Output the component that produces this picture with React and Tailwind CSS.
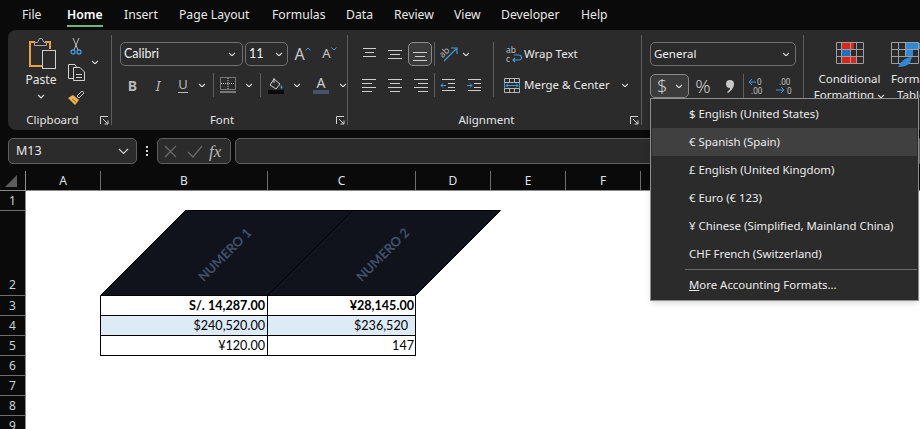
const ui = { fontFamily: '"Noto Sans", "Open Sans", sans-serif' };

const tabs = [
  ["File", 45],
  ["Home", 57],
  ["Insert", 55],
  ["Page Layout", 93],
  ["Formulas", 74],
  ["Data", 48],
  ["Review", 60],
  ["View", 47],
  ["Developer", 80],
  ["Help", 40],
];

function Chev({ size = 8, color = "#d6d6d6" }) {
  return (
    <svg width={size} height={size * 0.6} viewBox="0 0 8 5" fill="none" stroke={color} strokeWidth="1.3">
      <path d="M1 1l3 3 3-3" />
    </svg>
  );
}

function Slot({ w, className = "", children }) {
  return (
    <div className={`flex h-full shrink-0 items-center justify-center ${w} ${className}`}>{children}</div>
  );
}

function VLine({ tall }) {
  return <div className={`w-px shrink-0 self-start bg-[#5e5e5e] ${tall ? "h-[31px]" : "h-[24px]"}`}></div>;
}

function Launcher() {
  return (
    <div className="flex w-[14px] shrink-0 justify-center">
      <svg width="9" height="9" viewBox="0 0 9 9" fill="none" stroke="#cfcfcf" strokeWidth="1">
        <path d="M.5 8V.5H8M3 3l5 5M8 4.5V8H4.5" />
      </svg>
    </div>
  );
}

function GroupLabel({ w, mt = "mt-[14px]", children }) {
  return (
    <div className={`flex h-[18px] shrink-0 items-center ${mt}`}>
      <div className={`text-center text-[11.5px] text-[#e4e4e4] ${w}`}>{children}</div>
      <div className="ml-auto">
        <Launcher />
      </div>
    </div>
  );
}

function GroupSep() {
  return <div className="my-[5px] w-px shrink-0 bg-[#5e5e5e]"></div>;
}

function Lines({ rows, w = 15, h = 14 }) {
  // rows: [y, x1, x2]
  return (
    <svg width={w} height={h} viewBox={`0 0 ${w} ${h}`} fill="none" stroke="#cdcdcd" strokeWidth="1">
      {rows.map((r, i) => (
        <path key={i} d={`M${r[1]} ${r[0] + 0.5}H${r[2]}`} />
      ))}
    </svg>
  );
}

function PasteIcon() {
  return (
    <svg width="30" height="34" viewBox="0 0 30 34" fill="none">
      <path d="M7 6H2v24h13" stroke="#e9a23b" strokeWidth="2" />
      <path d="M17 6h5v7" stroke="#e9a23b" strokeWidth="2" />
      <path d="M6.500 9.500V6.500H9.500L11.500 2.500H14L16 6.500H18.500V9.500Z" stroke="#a8a8a8" fill="#2b2b2b" />
      <rect x="14.500" y="14.500" width="13" height="18" stroke="#cfcfcf" fill="#2b2b2b" />
    </svg>
  );
}

function ScissorsIcon() {
  return (
    <svg width="12" height="17" viewBox="0 0 12 17" fill="none">
      <path d="M3 0l5 12M9 0L4 12" stroke="#bdbdbd" strokeWidth="1" />
      <circle cx="3" cy="14" r="2" stroke="#3d9be0" strokeWidth="1.300" />
      <circle cx="9" cy="14" r="2" stroke="#3d9be0" strokeWidth="1.300" />
    </svg>
  );
}

function CopyIcon() {
  return (
    <svg width="17" height="17" viewBox="0 0 17 17" fill="none" stroke="#d0d0d0" strokeWidth="1">
      <path d="M5.500 14.500H.5V.5H7L8.500 3" />
      <path d="M5.500 3.500H12L16.500 8V16.500H5.500Z" fill="#2b2b2b" />
      <path d="M8 10.500H14M8 13.500H14" />
    </svg>
  );
}

function BrushIcon() {
  return (
    <svg width="18" height="16" viewBox="0 0 18 16">
      <path d="M10 6l5-5 2 2-5 5z" fill="none" stroke="#c4c4c4" strokeWidth="1" />
      <path d="M1 8l5-3 6 5-4 5z" fill="#eeb04a" />
      <path d="M5 9l4 3" stroke="#8a6a2e" strokeWidth="1" />
    </svg>
  );
}

function BordersIcon() {
  return (
    <svg width="16" height="16" viewBox="0 0 16 16" fill="none" stroke="#c4c4c4" strokeWidth="1">
      <path d="M.5.5h15v12H.5z" strokeDasharray="1 1" />
      <path d="M8 1v11M1 6.500h14" strokeDasharray="1 1" />
      <path d="M0 15h16" />
    </svg>
  );
}

function FillIcon() {
  return (
    <svg width="16" height="17" viewBox="0 0 16 17" fill="none">
      <path d="M6 2l6 5-4 5-6-4z" stroke="#d0d0d0" strokeWidth="1" fill="#2b2b2b" />
      <path d="M6 1v5" stroke="#d0d0d0" strokeWidth="1" />
      <path d="M13 8c1.500 1.500 2 3 1 3.500s-2-.5-1-3.500z" fill="#3d9be0" />
      <path d="M0 15h16" stroke="#0b0b0e" strokeWidth="4" />
    </svg>
  );
}

function ZCFIcon() {
  return (
    <svg width="28" height="23" viewBox="0 0 28 23">
      <rect x="5" y="0" width="13" height="7" fill="#dc2419" />
      <rect x="5" y="8" width="9" height="7" fill="#1e70c1" />
      <rect x="5" y="15" width="15" height="7" fill="#dc2419" />
      <path d="M.5.5h27v21H.5zM5.500 0v22M14.500 0v22M20.500 0v22M0 7.500h28M0 14.500h28" fill="none" stroke="#9e9e9e" strokeWidth="1" />
    </svg>
  );
}

function TableIcon() {
  return (
    <svg width="29" height="26" viewBox="0 0 29 26">
      <rect x="14" y="8" width="8" height="7" fill="#2f87d6" />
      <rect x="14" y="1" width="15" height="6" fill="#2f87d6" />
      <path d="M.5.5h27v21H.5zM7.500 0v22M14.500 0v15M0 7.500h28M0 14.500h28" fill="none" stroke="#9e9e9e" strokeWidth="1" />
      <path d="M7 25c3-6 8-10 14-10l-2 6c-3 3-8 4-12 4z" fill="#2f87d6" />
    </svg>
  );
}

function Ribbon() {
  return (
    <div className="ml-[8px] flex h-[100px] shrink-0 overflow-hidden rounded-l-[8px] bg-[#2b2b2b]">
      {/* Clipboard */}
      <div className="flex w-[103px] shrink-0 flex-col">
        <div className="flex h-[81px] shrink-0">
          <div className="flex w-[56px] flex-col items-center pl-[10px] pt-[6px]">
            <div className="ml-[4px]"><PasteIcon /></div>
            <div className="mt-[1px] text-[12px] leading-[18px] text-[#e8e8e8]">Paste</div>
            <div className="mt-[5px]"><Chev /></div>
          </div>
          <div className="flex w-[24px] flex-col items-center pt-[8px]">
            <ScissorsIcon />
            <div className="mt-[9px]"><CopyIcon /></div>
            <div className="mt-[9px]"><BrushIcon /></div>
          </div>
          <div className="flex w-[14px] items-center pb-[17px] pl-[3px]"><Chev /></div>
        </div>
        <GroupLabel w="w-[91px]" mt="mt-0">Clipboard</GroupLabel>
      </div>
      <GroupSep />

      {/* Font */}
      <div className="flex w-[235px] shrink-0 flex-col pt-[12px]">
        <div className="flex h-[24px] shrink-0 items-center pl-[8px]">
          <div className="flex h-[24px] w-[123px] items-center justify-between rounded-[5px] border border-[#707070] pl-[3px] pr-[6px] text-[12.5px] text-[#f0f0f0]" style={{ fontFamily: "Lato, sans-serif" }}>
            Calibri <Chev />
          </div>
          <div className="ml-[2px] flex h-[24px] w-[43px] items-center justify-between rounded-[5px] border border-[#707070] pl-[3px] pr-[4px] text-[12.5px] text-[#f0f0f0]" style={{ fontFamily: "Lato, sans-serif" }}>
            11 <Chev />
          </div>
          <Slot w="w-[27px]" className="ml-[1px]">
            <span className="text-[16px] text-[#c8c8c8]">A</span>
            <svg width="6" height="4" viewBox="0 0 6 4" fill="none" stroke="#3d9be0" className="mb-[10px]"><path d="M.5 3.500L3 1l2.500 2.500" /></svg>
          </Slot>
          <Slot w="w-[27px]">
            <span className="text-[13px] text-[#c8c8c8]">A</span>
            <svg width="6" height="4" viewBox="0 0 6 4" fill="none" stroke="#3d9be0" className="mb-[10px]"><path d="M.5.5L3 3l2.500-2.500" /></svg>
          </Slot>
        </div>
        <div className="mt-[7px] flex h-[24px] shrink-0 items-center pl-[8px]">
          <Slot w="w-[25px]"><span className="text-[14px] font-bold text-[#b8b8b8]">B</span></Slot>
          <Slot w="w-[26px]"><span className="text-[14px] italic text-[#b8b8b8]">I</span></Slot>
          <Slot w="w-[24px]"><span className="border-b border-[#b8b8b8] text-[13px] leading-[15px] text-[#b8b8b8]">U</span></Slot>
          <Slot w="w-[14px]"><Chev /></Slot>
          <Slot w="w-[4px]"></Slot>
          <VLine />
          <Slot w="w-[5px]"></Slot>
          <Slot w="w-[17px]"><BordersIcon /></Slot>
          <Slot w="w-[6px]"></Slot>
          <Slot w="w-[14px]"><Chev /></Slot>
          <Slot w="w-[4px]"></Slot>
          <VLine />
          <Slot w="w-[6px]"></Slot>
          <Slot w="w-[17px]"><FillIcon /></Slot>
          <Slot w="w-[6px]"></Slot>
          <Slot w="w-[14px]"><Chev /></Slot>
          <Slot w="w-[8px]"></Slot>
          <Slot w="w-[18px]">
            <div className="flex flex-col items-center">
              <span className="text-[14px] leading-[14px] text-[#cfcfcf]">A</span>
              <div className="h-[4px] w-[16px] bg-[#44546a]"></div>
            </div>
          </Slot>
          <Slot w="w-[6px]"></Slot>
          <Slot w="w-[14px]"><Chev /></Slot>
        </div>
        <GroupLabel w="w-[220px]">Font</GroupLabel>
      </div>
      <GroupSep />

      {/* Alignment */}
      <div className="flex w-[293px] shrink-0 flex-col pt-[12px]">
        <div className="flex h-[24px] shrink-0 items-center pl-[9px]">
          <Slot w="w-[24px]"><Lines rows={[[1, 1, 14], [5, 3, 12], [9, 1, 14]]} /></Slot>
          <Slot w="w-[27px]"><Lines rows={[[3, 1, 15], [7, 3, 13], [11, 1, 15]]} w={16} /></Slot>
          <div className="flex h-[24px] w-[24px] shrink-0 items-center justify-center rounded-[5px] border border-[#8a8a8a] bg-[#3b3b3b]">
            <Lines rows={[[5, 1, 15], [9, 3, 13], [13, 1, 15]]} w={16} />
          </div>
          <Slot w="w-[2px]"></Slot>
          <VLine />
          <Slot w="w-[24px]" className="ml-[2px]">
            <svg width="20" height="18" viewBox="0 0 20 18" fill="none">
              <text x="1" y="11" fontSize="9" fill="#b8b8b8" transform="rotate(-45 5 9)" style={ui}>ab</text>
              <path d="M5 16L17 4M12 3h6v6" stroke="#3d9be0" strokeWidth="1.200" />
            </svg>
          </Slot>
          <Slot w="w-[10px]"><Chev /></Slot>
          <Slot w="w-[22px]"></Slot>
          <VLine tall />
          <Slot w="w-[12px]"></Slot>
          <Slot w="w-[17px]">
            <svg width="17" height="18" viewBox="0 0 17 18" fill="none">
              <text x="0" y="8" fontSize="8.500" fill="#bdbdbd" style={ui}>ab</text>
              <text x="0" y="17" fontSize="8.500" fill="#bdbdbd" style={ui}>c</text>
              <path d="M7 15h6a2.500 2.500 0 000-5H8M9 13l-2 2 2 2" stroke="#3d9be0" strokeWidth="1.100" />
            </svg>
          </Slot>
          <span className="ml-px whitespace-nowrap text-[11.5px] text-[#e8e8e8]">Wrap Text</span>
        </div>
        <div className="mt-[7px] flex h-[24px] shrink-0 items-center pl-[9px]">
          <Slot w="w-[24px]"><Lines rows={[[1, 1, 15], [5, 1, 11], [9, 1, 15], [13, 1, 11]]} w={16} /></Slot>
          <Slot w="w-[27px]"><Lines rows={[[1, 1, 15], [5, 3, 13], [9, 1, 15], [13, 3, 13]]} w={16} /></Slot>
          <Slot w="w-[26px]"><Lines rows={[[1, 1, 15], [5, 5, 15], [9, 1, 15], [13, 5, 15]]} w={16} /></Slot>
          <VLine />
          <Slot w="w-[26px]">
            <svg width="16" height="14" viewBox="0 0 16 14" fill="none" stroke="#cdcdcd"><path d="M2 1.500h13M8 5.500h7M8 9.500h7M2 12.500h13" /><path d="M6 7.500H1M3 5.500l-2 2 2 2" stroke="#3d9be0" /></svg>
          </Slot>
          <Slot w="w-[26px]">
            <svg width="16" height="14" viewBox="0 0 16 14" fill="none" stroke="#cdcdcd"><path d="M2 1.500h13M8 5.500h7M8 9.500h7M2 12.500h13" /><path d="M1 7.500h5M4 5.500l2 2-2 2" stroke="#3d9be0" /></svg>
          </Slot>
          <Slot w="w-[6px]"></Slot>
          <VLine />
          <Slot w="w-[10px]"></Slot>
          <Slot w="w-[16px]">
            <svg width="16" height="15" viewBox="0 0 16 15" fill="none">
              <path d="M.5.5h15v14H.5zM5.500 0v4M10.500 0v4M5.500 11v4M10.500 11v4M0 4.500h16M0 10.500h16" stroke="#b4b4b4" />
              <path d="M.5 4.500v6M15.500 4.500v6M2 7.500h12M4 5.500l-2 2 2 2M12 5.500l2 2-2 2" stroke="#3d9be0" />
            </svg>
          </Slot>
          <span className="ml-[4px] whitespace-nowrap text-[11.5px] text-[#e8e8e8]">Merge &amp; Center</span>
          <Slot w="w-[14px]" className="ml-[8px]"><Chev /></Slot>
        </div>
        <GroupLabel w="w-[277px]">Alignment</GroupLabel>
      </div>
      <GroupSep />

      {/* Number, its label is behind the open menu */}
      <div className="flex w-[161px] shrink-0 flex-col pl-[8px] pt-[12px]">
        <div className="flex h-[24px] w-[146px] shrink-0 items-center justify-between rounded-[5px] border border-[#707070] pl-[3px] pr-[5px] text-[11.5px] text-[#f0f0f0]">
          General <Chev />
        </div>
        <div className="mt-[8px] flex h-[24px] shrink-0 items-center">
          <div className="flex h-[24px] w-[39px] shrink-0 items-center justify-between rounded-[5px] border border-[#8a8a8a] bg-[#3b3b3b] pl-[6px] pr-[5px]">
            <span className="text-[18px] font-light text-[#cfcfcf]">$</span><Chev />
          </div>
          <Slot w="w-[28px]"><span className="text-[19px] font-light leading-none text-[#c8c8c8]">%</span></Slot>
          <Slot w="w-[26px]">
            <svg width="8" height="13" viewBox="0 0 8 13"><path d="M4 0a4 4 0 014 4c0 4-3 7-6 9l-1-1c2-1 3-3 3-4a4 4 0 010-8z" fill="#c8c8c8" /></svg>
          </Slot>
          <VLine />
          <Slot w="w-[26px]">
            <svg width="18" height="18" viewBox="0 0 18 18" fill="none">
              <text x="9" y="8" fontSize="8" fill="#c4c4c4" style={ui}>0</text>
              <text x="3" y="17" fontSize="8" fill="#c4c4c4" style={ui}>.00</text>
              <path d="M8 5H1M4 2L1 5l3 3" stroke="#3d9be0" />
            </svg>
          </Slot>
          <Slot w="w-[28px]">
            <svg width="18" height="18" viewBox="0 0 18 18" fill="none">
              <text x="4" y="8" fontSize="8" fill="#c4c4c4" style={ui}>.00</text>
              <text x="12" y="17" fontSize="8" fill="#c4c4c4" style={ui}>0</text>
              <path d="M1 13h8M6 10l3 3-3 3" stroke="#3d9be0" />
            </svg>
          </Slot>
        </div>
      </div>
      <GroupSep />

      {/* Styles */}
      <div className="flex pt-[12px]">
        <div className="flex w-[87px] shrink-0 flex-col items-center pl-[4px]">
          <ZCFIcon />
          <div className="mt-[6px] text-center text-[11.5px] leading-[16px] text-[#e8e8e8]">Conditional<br />Formatting <span className="inline-block align-middle"><Chev /></span></div>
        </div>
        <div className="flex w-[60px] shrink-0 flex-col">
          <TableIcon />
          <div className="mt-[3px] whitespace-nowrap text-[11.5px] leading-[16px] text-[#e8e8e8]">Format as<br /><span className="pl-[6px]">Table</span></div>
        </div>
      </div>
    </div>
  );
}

function FormulaBar() {
  return (
    <div className="mt-[8px] flex h-[26px] shrink-0 items-center pl-[8px]">
      <div className="flex h-[26px] w-[129px] shrink-0 items-center justify-between rounded-[5px] border border-[#5f5f5f] bg-[#2b2b2b] px-[7px] text-[12.5px] text-[#e8e8e8]">
        M13
        <svg width="11" height="7" viewBox="0 0 11 7" fill="none" stroke="#d0d0d0" strokeWidth="1.200"><path d="M1 1l4.500 4.500L10 1" /></svg>
      </div>
      <div className="flex w-[20px] shrink-0 flex-col items-center gap-[2px]">
        <div className="h-[2px] w-[2px] bg-[#d8d8d8]"></div>
        <div className="h-[2px] w-[2px] bg-[#d8d8d8]"></div>
        <div className="h-[2px] w-[2px] bg-[#d8d8d8]"></div>
      </div>
      <div className="flex h-[26px] w-[74px] shrink-0 items-center rounded-[5px] border border-[#5f5f5f] bg-[#2b2b2b] pl-[6px]">
        <svg width="13" height="13" viewBox="0 0 13 13" fill="none" stroke="#6a6a6a" strokeWidth="1.200"><path d="M1 1l11 11M12 1L1 12" /></svg>
        <svg width="16" height="13" viewBox="0 0 16 13" fill="none" stroke="#6a6a6a" strokeWidth="1.200" className="ml-[10px]"><path d="M1 7l5 5L15 1" /></svg>
        <span className="ml-[6px] text-[17px] italic leading-none text-[#b8b8b8]" style={{ fontFamily: '"Liberation Serif", serif' }}>fx</span>
      </div>
      <div className="ml-[4px] h-[26px] flex-1 rounded-l-[5px] border border-[#5f5f5f] bg-[#2b2b2b]"></div>
    </div>
  );
}

const columns = [
  ["A", "w-[75px]"],
  ["B", "w-[167px]"],
  ["C", "w-[148px]"],
  ["D", "w-[75px]"],
  ["E", "w-[75px]"],
  ["F", "w-[75px]"],
];

function ColumnHeaders() {
  return (
    <div className="mt-[7px] flex h-[20px] shrink-0 border-b border-[#8a8a8a] bg-[#0a0a0a]">
      <div className="flex w-[26px] shrink-0 items-end justify-center border-r border-[#8a8a8a] pb-[3px] pr-[4px]">
        <svg width="12" height="12" viewBox="0 0 12 12"><path d="M12 0v12H0z" fill="#5c5c5c" /></svg>
      </div>
      {columns.map(([name, w]) => (
        <div key={name} className={`flex shrink-0 items-center justify-center border-r border-[#6e6e6e] text-[12px] text-[#dbe3ea] ${w}`}>
          {name}
        </div>
      ))}
    </div>
  );
}

const cell = { fontFamily: "Lato, Carlito, sans-serif" };

function TableRow({ n, b, c, bold, blue, cPad = "pr-[1px]" }) {
  return (
    <div className="flex h-[20px]">
      <div className="flex h-[20px] w-[26px] shrink-0 items-center justify-center border-r border-b border-r-[#8a8a8a] border-b-[#6e6e6e] bg-[#0a0a0a] text-[12px] text-[#c9d3da]">{n}</div>
      <div className="w-[74px] shrink-0"></div>
      <div className={`flex w-[168px] shrink-0 items-center justify-end border-x border-b border-black pr-[2px] pt-px text-[12.6px] text-black ${blue ? "bg-[#ddebf7]" : ""} ${bold ? "font-bold" : ""}`} style={cell}>{b}</div>
      <div className={`flex w-[148px] shrink-0 items-center justify-end border-r border-b border-black pt-px text-[12.6px] text-black ${cPad} ${blue ? "bg-[#ddebf7]" : ""} ${bold ? "font-bold" : ""}`} style={cell}>{c}</div>
    </div>
  );
}

function PlainRow({ n }) {
  return (
    <div className="flex h-[20px]">
      <div className="flex h-[20px] w-[26px] shrink-0 items-center justify-center border-r border-b border-r-[#8a8a8a] border-b-[#6e6e6e] bg-[#0a0a0a] text-[12px] text-[#c9d3da]">{n}</div>
    </div>
  );
}

function SlantedHeader() {
  return (
    <>
      <svg width="402" height="86" viewBox="0 0 402 86" className="absolute left-[74px] top-[-1px]">
        <path d="M.5 85.500L85.500 .5H400.500L315.500 85.500Z" fill="#10131b" stroke="#000" strokeWidth="1" />
        <path d="M167.500 85.500L252.500 .5" stroke="#000" strokeWidth="1" />
      </svg>
      <span className="absolute left-[199px] top-[44px] -translate-x-1/2 -translate-y-1/2 -rotate-45 whitespace-nowrap text-[13px] font-bold text-[#42506a]" style={cell}>NUMERO 1</span>
      <span className="absolute left-[357px] top-[44px] -translate-x-1/2 -translate-y-1/2 -rotate-45 whitespace-nowrap text-[13px] font-bold text-[#42506a]" style={cell}>NUMERO 2</span>
    </>
  );
}

function Sheet() {
  return (
    <div className="min-h-0 flex-1 bg-white">
      <PlainRow n="1" />
      <div className="flex h-[85px]">
        <div className="flex h-[85px] w-[26px] shrink-0 items-end justify-center border-r border-b border-r-[#8a8a8a] border-b-[#6e6e6e] bg-[#0a0a0a] pb-[1px] text-[12px] text-[#c9d3da]">2</div>
        <div className="relative flex-1">
          <SlantedHeader />
        </div>
      </div>
      <TableRow n="3" b="S/. 14,287.00" c="¥28,145.00" bold />
      <TableRow n="4" b="$240,520.00" c="$236,520" cPad="pr-[7px]" blue />
      <TableRow n="5" b="¥120.00" c="147" />
      <PlainRow n="6" />
      <PlainRow n="7" />
      <PlainRow n="8" />
      <PlainRow n="9" />
    </div>
  );
}

const formats = [
  "$ English (United States)",
  "€ Spanish (Spain)",
  "£ English (United Kingdom)",
  "€ Euro (€ 123)",
  "¥ Chinese (Simplified, Mainland China)",
  "CHF French (Switzerland)",
];

function AccountingMenu() {
  return (
    <div className="absolute left-[650px] top-[98px] flex h-[203px] w-[269px] flex-col border border-[#8f8f8f] bg-[#2b2b2b] p-px shadow-md">
      {formats.map((f, i) => (
        <div key={f} className={`flex h-[28px] shrink-0 items-center pl-[37px] text-[11.4px] text-[#ececec] ${i === 1 ? "bg-[#404040]" : ""}`}>
          {f}
        </div>
      ))}
      <div className="ml-[33px] mt-px h-px shrink-0 bg-[#6a6a6a]"></div>
      <div className="flex h-[30px] shrink-0 items-center pl-[37px] text-[11.4px] text-[#ececec]">
        <span><span className="underline">M</span>ore Accounting Formats...</span>
      </div>
    </div>
  );
}

export default function App() {
  return (
    <div className="relative flex h-[429px] w-[920px] flex-col overflow-hidden bg-[#0a0a0a]" style={ui}>
      <div className="flex h-[30px] shrink-0 pl-[22px] pt-[6px]">
        {tabs.map(([name, w]) => (
          <div key={name} className={`shrink-0 ${name === "Home" ? "font-semibold text-white" : "text-[#e8e8e8]"}`} style={{ width: w }}>
            <div className={`w-fit text-[12.2px] leading-[18px] ${name === "Home" ? "border-b-2 border-[#68b884] pb-px" : ""}`}>{name}</div>
          </div>
        ))}
      </div>
      <Ribbon />
      <FormulaBar />
      <ColumnHeaders />
      <Sheet />
      <AccountingMenu />
    </div>
  );
}
